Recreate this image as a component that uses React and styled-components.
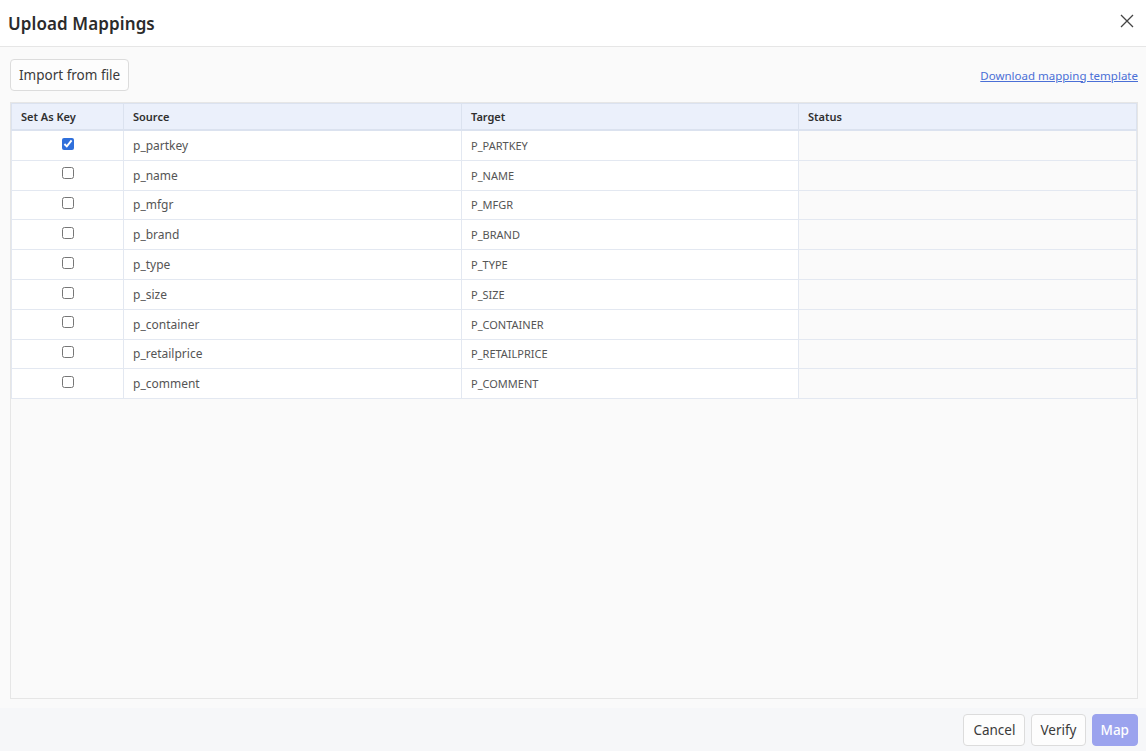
import React from "react";
import styled, { createGlobalStyle } from "styled-components";

const GlobalStyle = createGlobalStyle`
  html, body {
    margin: 0;
    padding: 0;
    background: #ffffff;
  }
  body {
    font-family: "Noto Sans", "Open Sans", sans-serif;
    color: #333;
  }
`;

const Modal = styled.div`
  width: 1146px;
  height: 751px;
  display: flex;
  flex-direction: column;
  background: #fff;
`;

const Header = styled.div`
  height: 47px;
  border-bottom: 1px solid #e6e6e6;
  display: flex;
  align-items: center;
  justify-content: space-between;
  padding: 0 7px 0 8px;
  box-sizing: border-box;
  flex-shrink: 0;
  h1 {
    margin: 0;
    font-size: 17px;
    font-weight: 600;
    color: #2b2b2b;
    letter-spacing: 0.1px;
  }
`;

const CloseButton = styled.button`
  border: 0;
  background: none;
  padding: 0;
  width: 24px;
  height: 24px;
  display: flex;
  align-items: center;
  justify-content: center;
  cursor: pointer;
  margin-top: -4px;
`;

const Body = styled.div`
  flex: 1;
  background: #fafafa;
  padding: 12px 8px 9px 10px;
  display: flex;
  flex-direction: column;
  gap: 11px;
  min-height: 0;
`;

const Toolbar = styled.div`
  display: flex;
  align-items: center;
  justify-content: space-between;
`;

const Button = styled.button`
  font-family: inherit;
  font-size: 13.5px;
  height: 32px;
  padding: 0 ${(p) => p.$pad || 8}px;
  border-radius: 4px;
  border: 1px solid ${(p) => (p.$primary ? "#9ba3ee" : "#dcdcdc")};
  background: ${(p) => (p.$primary ? "#9ba3ee" : "#fdfdfd")};
  color: ${(p) => (p.$primary ? "#fff" : "#3a3a3a")};
  font-weight: ${(p) => (p.$primary ? 500 : 400)};
  cursor: pointer;
`;

const Link = styled.a`
  font-size: 11.5px;
  color: #4a6fd6;
  text-decoration: underline;
  cursor: pointer;
`;

const TableWrap = styled.div`
  flex: 1;
  border: 1px solid #e6e6e6;
`;

const Table = styled.table`
  width: 100%;
  border-collapse: collapse;
  table-layout: fixed;
  font-size: 12px;
  th {
    background: #ebf0fb;
    height: 25px;
    text-align: left;
    font-weight: 600;
    font-size: 11px;
    color: #2f2f2f;
    padding: 0 9px;
    border-right: 1px solid #dbe2ef;
    border-bottom: 2px solid #dbe2ef;
    border-top: 1px solid #dbe2ef;
  }
  th:first-child {
    border-left: 1px solid #dbe2ef;
  }
`;

const Cell = styled.td`
  height: 28.8px;
  padding: 0 9px;
  background: ${(p) => (p.$muted ? "#fafafa" : "#fff")};
  border: 1px solid #e3e8f1;
  color: #555;
  font-size: ${(p) => (p.$small ? "11px" : "12px")};
  text-align: ${(p) => (p.$center ? "center" : "left")};
  vertical-align: middle;
`;

const Check = styled.input`
  width: 12px;
  height: 12px;
  margin: 0;
  accent-color: #2f6fdb;
  vertical-align: middle;
  position: relative;
  top: -3px;
`;

const Footer = styled.div`
  height: 43px;
  flex-shrink: 0;
  background: #f6f7f9;
  display: flex;
  align-items: center;
  justify-content: flex-end;
  gap: 6px;
  padding: 0 8px 0 0;
`;

const rows = [
  ["p_partkey", "P_PARTKEY", true],
  ["p_name", "P_NAME"],
  ["p_mfgr", "P_MFGR"],
  ["p_brand", "P_BRAND"],
  ["p_type", "P_TYPE"],
  ["p_size", "P_SIZE"],
  ["p_container", "P_CONTAINER"],
  ["p_retailprice", "P_RETAILPRICE"],
  ["p_comment", "P_COMMENT"],
];

export default function App() {
  return (
    <Modal>
      <GlobalStyle />
      <Header>
        <h1>Upload Mappings</h1>
        <CloseButton aria-label="Close">
          <svg width="14" height="14" viewBox="0 0 14 14">
            <path d="M1 1L13 13M13 1L1 13" stroke="#444" strokeWidth="1.3" />
          </svg>
        </CloseButton>
      </Header>
      <Body>
        <Toolbar>
          <Button>Import from file</Button>
          <Link>Download mapping template</Link>
        </Toolbar>
        <TableWrap>
          <Table>
            <colgroup>
              <col style={{ width: 112 }} />
              <col style={{ width: 338 }} />
              <col style={{ width: 337 }} />
              <col />
            </colgroup>
            <thead>
              <tr>
                <th>Set As Key</th>
                <th>Source</th>
                <th>Target</th>
                <th>Status</th>
              </tr>
            </thead>
            <tbody>
              {rows.map(([src, tgt, key]) => (
                <tr key={src}>
                  <Cell $center>
                    <Check type="checkbox" defaultChecked={!!key} />
                  </Cell>
                  <Cell>{src}</Cell>
                  <Cell $small>{tgt}</Cell>
                  <Cell $muted />
                </tr>
              ))}
            </tbody>
          </Table>
        </TableWrap>
      </Body>
      <Footer>
        <Button $pad={9}>Cancel</Button>
        <Button $pad={8}>Verify</Button>
        <Button $primary $pad={8}>Map</Button>
      </Footer>
    </Modal>
  );
}
